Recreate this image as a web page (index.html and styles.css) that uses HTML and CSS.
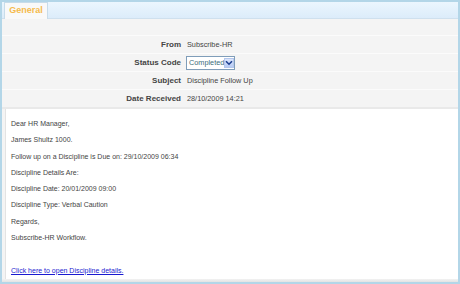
FILE: index.html
```html
<!DOCTYPE html>
<html lang="en">

<head>
  <meta charset="UTF-8">
  <title>Discipline Follow Up</title>
  <link rel="stylesheet" href="styles.css">
</head>

<body>
  <div class="window">
    <div class="tabbar">
      <div class="tab">General</div>
    </div>

    <div class="fields">
      <div class="row">
        <label>From</label>
        <span class="value">Subscribe-HR</span>
      </div>
      <div class="row">
        <label>Status Code</label>
        <span class="combo">
          <span class="combo-text">Completed</span>
          <span class="combo-btn">
            <svg width="8" height="6" viewBox="0 0 8 6"><path d="M1 1.2 L4 4.2 L7 1.2" fill="none" stroke="#1d3f8f" stroke-width="1.6"/></svg>
          </span>
        </span>
      </div>
      <div class="row">
        <label>Subject</label>
        <span class="value">Discipline Follow Up</span>
      </div>
      <div class="row last">
        <label>Date Received</label>
        <span class="value">28/10/2009 14:21</span>
      </div>
    </div>

    <div class="message">
      <p>Dear HR Manager,</p>
      <p>James Shultz 1000.</p>
      <p>Follow up on a Discipline is Due on: 29/10/2009 06:34</p>
      <p>Discipline Details Are:</p>
      <p>Discipline Date: 20/01/2009 09:00</p>
      <p>Discipline Type: Verbal Caution</p>
      <p>Regards,</p>
      <p>Subscribe-HR Workflow.</p>
      <p>&nbsp;</p>
      <p><a href="#">Click here to open Discipline details.</a></p>
    </div>

    <div class="footer"></div>
  </div>
</body>

</html>
```

FILE: styles.css
```css
html,
body {
  margin: 0;
  padding: 0;
}

body {
  background-color: #b3d6e8;
  font-family: "Liberation Sans", Arial, sans-serif;
  color: #333;
  height: 284px;
  overflow: hidden;
}

.window {
  margin: 2px 2px 0 2px;
  height: 280px;
  background-color: #f4f4f4;
  display: flex;
  flex-direction: column;
}

/* Reiter oben */
.tabbar {
  height: 18px;
  background: linear-gradient(#ebf6fe, #dcecfa);
  border-bottom: 1px solid #cfe0ee;
  display: flex;
  align-items: flex-end;
  padding-left: 2px;
}

.tab {
  width: 42px;
  height: 16px;
  margin-bottom: -1px;
  background-color: #f9f9f9;
  border: 1px solid #c8dcea;
  border-bottom: none;
  color: #f5bb4c;
  font-weight: bold;
  font-size: 9px;
  line-height: 15px;
  text-align: center;
}

/* Felder */
.fields {
  padding-top: 16px;
  border-bottom: 2px solid #e9e9e9;
}

.row {
  display: grid;
  grid-template-columns: 179px 1fr;
  column-gap: 6px;
  align-items: center;
  height: 17px;
  border-top: 1px solid #fbfbfb;
}

.row.last {
  height: 17px;
}

.row label {
  text-align: right;
  font-weight: bold;
  font-size: 8px;
  color: #444;
}

.value {
  font-size: 7.3px;
  color: #444;
}

.combo {
  display: flex;
  align-items: center;
  width: 47px;
  height: 12px;
  margin-left: -1px;
  border: 1px solid #7f9db9;
  background-color: #fff;
}

.combo-text {
  flex: auto;
  font-size: 7.3px;
  color: #3b6d7a;
  padding-left: 2px;
}

.combo-btn {
  width: 11px;
  height: 10px;
  margin-right: 1px;
  background: linear-gradient(#dbe6fc, #b7cbf3);
  border: 1px solid #b4c7ec;
  box-sizing: border-box;
  display: flex;
  align-items: center;
  justify-content: center;
}

/* Nachricht */
.message {
  flex: auto;
  margin-left: 3px;
  background-color: #fff;
  border-left: 1px solid #e3e3e3;
  padding: 7px 0 0 5px;
  font-size: 7px;
  color: #444;
}

.message p {
  margin: 0;
  line-height: 16.3px;
}

.message a {
  color: #1a1ad0;
  text-decoration: underline;
}

.footer {
  height: 6px;
  background: linear-gradient(#f2f2f2, #e3e3e3);
}
```
